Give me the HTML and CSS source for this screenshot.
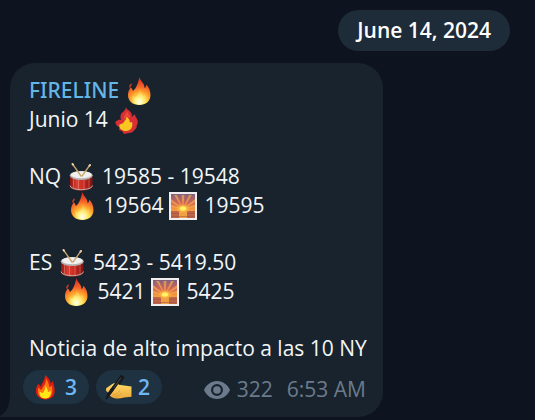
FILE: index.html
```html
<!DOCTYPE html>
<html lang="es">
<head>
<meta charset="utf-8">
<meta name="viewport" content="width=device-width, initial-scale=1">
<title>FIRELINE</title>
<link rel="stylesheet" href="styles.css">
</head>
<body>
<svg class="sprite" aria-hidden="true">
  <defs>
    <radialGradient id="flame-body" gradientUnits="userSpaceOnUse" cx="15" cy="25" r="24">
      <stop offset="0" stop-color="#fffbd0"/>
      <stop offset=".22" stop-color="#ffe75a"/>
      <stop offset=".42" stop-color="#ffa52c"/>
      <stop offset=".66" stop-color="#f4602a"/>
      <stop offset="1" stop-color="#d92a20"/>
    </radialGradient>
    <radialGradient id="flame-core" cx=".5" cy=".85" r=".8">
      <stop offset="0" stop-color="#fffff2"/>
      <stop offset=".35" stop-color="#fff48a"/>
      <stop offset="1" stop-color="#ffb43c" stop-opacity=".2"/>
    </radialGradient>
    <linearGradient id="drum-shell">
      <stop offset="0" stop-color="#8c1512"/>
      <stop offset=".3" stop-color="#dc3f31"/>
      <stop offset=".6" stop-color="#c92a22"/>
      <stop offset="1" stop-color="#7c110f"/>
    </linearGradient>
    <linearGradient id="sky" x2="0" y2="1">
      <stop offset="0" stop-color="#81607e"/>
      <stop offset=".35" stop-color="#cf665a"/>
      <stop offset=".65" stop-color="#f7983d"/>
    </linearGradient>
    <radialGradient id="sun-glow">
      <stop offset="0" stop-color="#fff36a"/>
      <stop offset=".35" stop-color="#ffd044"/>
      <stop offset="1" stop-color="#ff9838" stop-opacity="0"/>
    </radialGradient>
    <linearGradient id="skin" x2="0" y2="1">
      <stop offset="0" stop-color="#ffdc6b"/>
      <stop offset="1" stop-color="#edaa3b"/>
    </linearGradient>
  </defs>
  <symbol id="flame" viewBox="0 0 28 28">
    <path fill="url(#flame-body)" d="M14.500 0C15 4 19.800 6.200 19.600 11.200C21 10.200 21.300 8.700 21.300 7.500C24 10.300 25.500 14 25.500 18C25.500 24.500 20.500 28 14.500 28C7.500 28 3 24 3 18C3 14.500 4.600 12.500 5.500 10.300C7 11.200 7.500 12.500 7.800 14C11.300 11.500 12.900 6.500 14.500 0Z"/>
    <path fill="#d93b24" d="M6.800 6.200C5 7.200 3.900 8.600 4.300 10.700C5.800 9.900 6.800 8.600 6.800 6.200Z"/>
    <path fill="url(#flame-core)" d="M15 11C15.500 14.500 18 16 18 19C19.500 18.500 20 17.500 20.300 16C22.500 21.500 20.500 27.500 14.500 27.500C9 27.500 6.500 23.500 7.300 18.500C8.300 19 9.200 20 9.500 21C12.500 19 14.300 15.500 15 11Z"/>
  </symbol>
  <symbol id="wild-flame" viewBox="0 0 28 28">
    <path fill="#d82f35" d="M13 1C13.500 4 16 4 17.500 6C19 7.500 19 9 18.500 11C20 10.500 20 9 22 8.500C22 11 25 13 24.800 16C24.500 19 23 20 23.500 22C21 24 20 27 16 27L11 28L9 25L6 24L6.500 21C4 21 2 17 2.500 15.500C4 14.500 5 14.500 6 13.500L8 14C7 10 7.500 8 10 6C12 4.500 12.500 3 13 1Z"/>
    <path fill="#ed4a3e" d="M13.500 5C13.500 8 10 10 11 14L14 10L17 12C17 9 15 8 13.500 5Z"/>
    <path fill="#f9c622" d="M13.500 10.500C15.500 12 17 14 16.800 16.500L19 16C20.500 21 17.500 25 13 25C9 25 5.500 22.500 6.500 18.500C9 17.500 10 18 11.500 15C12.500 14 13.500 12.500 13.500 10.500Z"/>
  </symbol>
  <symbol id="drum" viewBox="0 0 28 28">
    <path fill="url(#drum-shell)" d="M3 13V23C3 29 25.500 29 25.500 23V13Z"/>
    <path fill="none" stroke="#eeb1a1" stroke-width=".4" d="M6.500 16V25M11.500 17V27M17 17V27M22 16V25"/>
    <path fill="none" stroke="#c2b4ad" stroke-width=".9" d="M3 22.500C3 28 25.500 28 25.500 22.500"/>
    <ellipse cx="14.250" cy="12.500" rx="11.500" ry="4.500" fill="#b5b4b5"/>
    <ellipse cx="14.250" cy="11.800" rx="10.500" ry="3.500" fill="#f1f0ee"/>
    <path fill="none" stroke="#c9a56c" stroke-width="1.300" stroke-linecap="round" d="M5.500 1L14 13M23 2L15 13"/>
    <path fill="none" stroke="#ead0a0" stroke-width="2" stroke-linecap="round" d="M5.500 1L6 1.700M23 2L22.500 2.700"/>
  </symbol>
  <symbol id="sunrise" viewBox="0 0 28 28">
    <path fill="#f0eeee" d="M0 0H28V28H0Z"/>
    <path fill="url(#sky)" d="M2 2H26V26H2Z"/>
    <path fill="#ffb54b" opacity=".6" d="M14 17L12.500 3H15.500ZM14 17L5 3H8ZM14 17L20 3H23ZM14 17L2 7V10ZM14 17L26 7V10ZM14 17L2 13V15ZM14 17L26 13V15Z"/>
    <path fill="#c06446" d="M2 18H26V26H2Z"/>
    <path fill="#f0a044" d="M10 18H18V26H10ZM2 18H26V19H2Z"/>
    <path fill="#9a4d51" opacity=".5" d="M2 21H10V22H2ZM18 21H26V22H18ZM2 24H26V25H2Z"/>
    <ellipse cx="14" cy="16.500" rx="8" ry="5" fill="url(#sun-glow)"/>
    <ellipse cx="14" cy="16.500" rx="3" ry="2" fill="#fff16a"/>
  </symbol>
  <symbol id="flat-flame" viewBox="0 0 24 26">
    <path fill="#df1e12" d="M11.500 0C14 2 17 5 17.500 9L19.500 6C20 9 21.800 12 21.500 17C21.500 22 18 25.500 12 25.500C6 25.500 2 22 2 16.500C2 13 3.500 11 4.500 9L7 12C8.500 8 11.500 5 11.500 0Z"/>
    <path fill="#ff7613" d="M12.500 4C15 7 15.500 9.500 16 13L18.500 11C20.500 19 18 24.500 12 24.500C6 24.500 3 20 4.500 13L7.500 15.500C10 12 12.500 9 12.500 4Z"/>
    <path fill="#ffe817" d="M12 11C13.500 13.500 14.500 15 14.500 18L17.500 16.500C18 22 15.500 24.500 12 24.500C7.500 24.500 5.500 22 6 17.500L9 19C11 16.500 12 14 12 11Z"/>
  </symbol>
  <symbol id="writing" viewBox="0 0 28 26">
    <path fill="url(#skin)" d="M1.500 13.500L8 9C12 7 14 8.500 16 10.500L20 11L27.500 12V22.500L20 23.500C14 25 9 24.500 6.500 22.500C4 21.500 3.500 19.500 4 19L1.500 17C.800 16 .800 14.500 1.500 13.500Z"/>
    <path fill="none" stroke="#cf8c2c" stroke-width=".6" stroke-linecap="round" d="M8 21C11 20.500 14 19 15 16.500M10.500 22.500C13 22 15.500 21 17 19"/>
    <path stroke="#17191c" stroke-width="3.500" stroke-linecap="round" d="M17 2L7.500 15"/>
    <path fill="#17191c" d="M6 14L9 16L4.500 22L1.500 25.500L.500 25L2 20Z"/>
    <path fill="none" stroke="#17191c" stroke-width="1.500" stroke-linejoin="round" d="M16 1L19.500 2.500L14.500 10"/>
    <path fill="none" stroke="#59605f" stroke-width=".7" d="M16.500 3L9 13.500"/>
  </symbol>
</svg>
<main class="chat">
  <time class="date" datetime="2024-06-14">June 14, 2024</time>
  <article class="bubble">
    <svg class="tail" viewBox="0 0 12 24" aria-hidden="true"><path d="M10 0C10 12 7 19 0 23V24H12V0Z"/></svg>
    <div class="text">
      <div class="group">
        <p><a class="channel" href="#">FIRELINE</a> <svg class="emoji"><use href="#flame"/></svg></p>
        <p>Junio 14 <svg class="emoji"><use href="#wild-flame"/></svg></p>
      </div>
      <div class="group">
        <p>NQ <svg class="emoji"><use href="#drum"/></svg> 19585 - 19548</p>
        <p class="indent-wide"><svg class="emoji"><use href="#flame"/></svg> 19564 <svg class="emoji"><use href="#sunrise"/></svg> 19595</p>
      </div>
      <div class="group">
        <p>ES <svg class="emoji"><use href="#drum"/></svg> 5423 - 5419.50</p>
        <p class="indent"><svg class="emoji"><use href="#flame"/></svg> 5421 <svg class="emoji"><use href="#sunrise"/></svg> 5425</p>
      </div>
      <p>Noticia de alto impacto a las 10 NY</p>
    </div>
    <footer class="footer">
      <div class="reactions">
        <button class="reaction" type="button"><svg class="reaction-icon"><use href="#flat-flame"/></svg>3</button>
        <button class="reaction" type="button"><svg class="reaction-icon"><use href="#writing"/></svg>2</button>
      </div>
      <div class="meta">
        <svg class="eye" viewBox="0 0 26 18" aria-hidden="true"><path fill-rule="evenodd" d="M13 0C19 0 24 4 26 9C24 14 19 18 13 18S2 14 0 9C2 4 7 0 13 0ZM13 3A6 6 0 1 0 13 15A6 6 0 1 0 13 3Z"/><circle cx="13" cy="9" r="3.800"/></svg>
        <span>322</span>
        <time class="time" datetime="06:53">6:53 AM</time>
      </div>
    </footer>
  </article>
</main>
</body>
</html>
```
FILE: styles.css
```css
* {
  box-sizing: border-box;
}

body {
  margin: 0;
  background: #0e141f;
  color: #f3f5f7;
  font: 21px/29px "Open Sans", "Noto Sans", sans-serif;
}

p {
  margin: 0;
}

.sprite {
  position: absolute;
  width: 0;
  height: 0;
}

.chat {
  display: flex;
  flex-direction: column;
  align-items: flex-start;
  gap: 12px;
  padding: 10px 25px 3px 10px;
}

.date {
  align-self: flex-end;
  padding: 6px 19px;
  border-radius: 21px;
  background: #1e2b38;
  color: #fff;
  font-weight: 600;
}

.bubble {
  position: relative;
  max-width: 100%;
  padding: 13px 10px 13px 13px;
  border-radius: 25px 25px 25px 0;
  background: #18232e;
}

.tail {
  position: absolute;
  bottom: 0;
  left: -10px;
  width: 12px;
  height: 24px;
  fill: #18232e;
}

.text {
  padding: 0 6px;
}

.group {
  margin-bottom: 28px;
}

.channel {
  color: #64b5e8;
  font-family: "Noto Sans", "Open Sans", sans-serif;
  font-weight: 500;
  text-decoration: none;
}

.emoji {
  width: 28px;
  height: 28px;
  margin-right: 2px;
  vertical-align: -7px;
}

.indent-wide {
  padding-left: 39px;
}

.indent {
  padding-left: 33px;
}

.footer {
  display: flex;
  justify-content: space-between;
  align-items: flex-end;
  gap: 16px;
  margin-top: 7px;
}

.reactions {
  display: flex;
  gap: 7px;
}

.reaction {
  display: flex;
  align-items: center;
  gap: 6px;
  height: 34px;
  padding: 0 12px 0 9px;
  border: 0;
  border-radius: 17px;
  background: #1e3241;
  color: #6fb6f4;
  font: inherit;
  font-weight: 600;
}

.reaction-icon {
  width: 27px;
  height: 25px;
}

.meta {
  display: flex;
  align-items: center;
  gap: 7px;
  padding-right: 7px;
  color: #6b7b8b;
}

.eye {
  width: 26px;
  height: 18px;
  fill: currentColor;
}

.time {
  margin-left: 7px;
}
```
